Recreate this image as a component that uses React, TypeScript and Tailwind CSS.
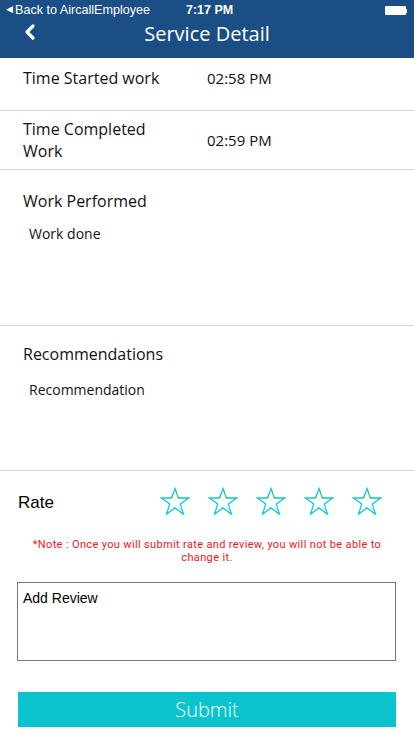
import { ChevronLeft } from "lucide-react";

function Star() {
    return (
        <svg width="30" height="30" viewBox="0 0 30 30" className="shrink-0">
            <polygon
                points="15,1.5 18.4,11 28.5,11 20.3,17 23.4,27 15,20.9 6.6,27 9.7,17 1.5,11 11.6,11"
                fill="none"
                stroke="#12c5d3"
                strokeWidth="1.3"
                strokeLinejoin="miter"
            />
        </svg>
    );
}

function InfoRow({ label, value, className }: { label: string; value: string; className: string }) {
    return (
        <div className={`flex items-center border-b border-[#d6d6d6] pl-[23px] ${className}`}>
            <div className="w-[150px] text-[16px] leading-[22px] text-[#111]">{label}</div>
            <div className="ml-[34px] text-[15px] text-[#111]">{value}</div>
        </div>
    );
}

export default function App() {
    return (
        <div className="w-[414px] h-[736px] bg-white overflow-hidden" style={{ fontFamily: '"Open Sans", sans-serif' }}>
            {/* header + status bar */}
            <div className="bg-[#1b4e84] h-[58px] text-white">
                <div className="relative h-[20px] flex items-center px-[6px] text-[12.6px]" style={{ fontFamily: '"Liberation Sans", Arial, sans-serif' }}>
                    <span className="text-[9px] mr-[2px]">◀</span>
                    <span>Back to AircallEmployee</span>
                    <span className="absolute left-[186px] font-bold text-[12.5px]">7:17 PM</span>
                    <div className="absolute right-[7px] top-[6px] flex items-center">
                        <div className="w-[21px] h-[9px] bg-white rounded-[1px]" />
                        <div className="w-[1.5px] h-[4px] bg-white" />
                    </div>
                </div>
                <div className="relative h-[28px] flex items-center justify-center">
                    <ChevronLeft className="absolute left-[18px] top-[0px] w-[24px] h-[24px]" strokeWidth={3.2} />
                    <span className="text-[20px] leading-[28px]">Service Detail</span>
                </div>
            </div>

            <InfoRow label="Time Started work" value="02:58 PM" className="h-[53px] pb-[12px]" />
            <InfoRow label="Time Completed Work" value="02:59 PM" className="h-[59px]" />

            <div className="h-[156px] border-b border-[#d6d6d6] pt-[20px] pl-[23px]">
                <div className="text-[16px] leading-[22px] text-[#111]">Work Performed</div>
                <div className="mt-[12px] ml-[6px] text-[14px] leading-[20px] text-[#111]">Work done</div>
            </div>

            <div className="h-[145px] border-b border-[#d6d6d6] pt-[17px] pl-[23px]">
                <div className="text-[16px] leading-[22px] text-[#111]">Recommendations</div>
                <div className="mt-[15px] ml-[6px] text-[14px] leading-[20px] text-[#111]">Recommendation</div>
            </div>

            <div className="px-[18px]">
                <div className="flex items-center mt-[16px] h-[30px]">
                    <span className="text-[17px] text-black w-[142px] pt-[1px]" style={{ fontFamily: '"Liberation Sans", Arial, sans-serif' }}>Rate</span>
                    <div className="flex gap-[18px]">
                        <Star />
                        <Star />
                        <Star />
                        <Star />
                        <Star />
                    </div>
                </div>
                <p className="mt-[21px] text-center text-[11px] leading-[13px] tracking-[0.35px] text-[#f01818] px-[6px]" style={{ fontFamily: 'Roboto, sans-serif' }}>
                    *Note : Once you will submit rate and review, you will not be able to change it.
                </p>
                <div className="mt-[18px] ml-[-1px] h-[79px] border border-[#777] px-[5px] py-[5px] text-[14px] text-black" style={{ fontFamily: '"Liberation Sans", Arial, sans-serif' }}>
                    Add Review
                </div>
                <button className="mt-[31px] w-[378px] h-[35px] bg-[#0ac3cc] text-white text-[20px] font-light flex items-center justify-center">
                    Submit
                </button>
            </div>
        </div>
    );
}
